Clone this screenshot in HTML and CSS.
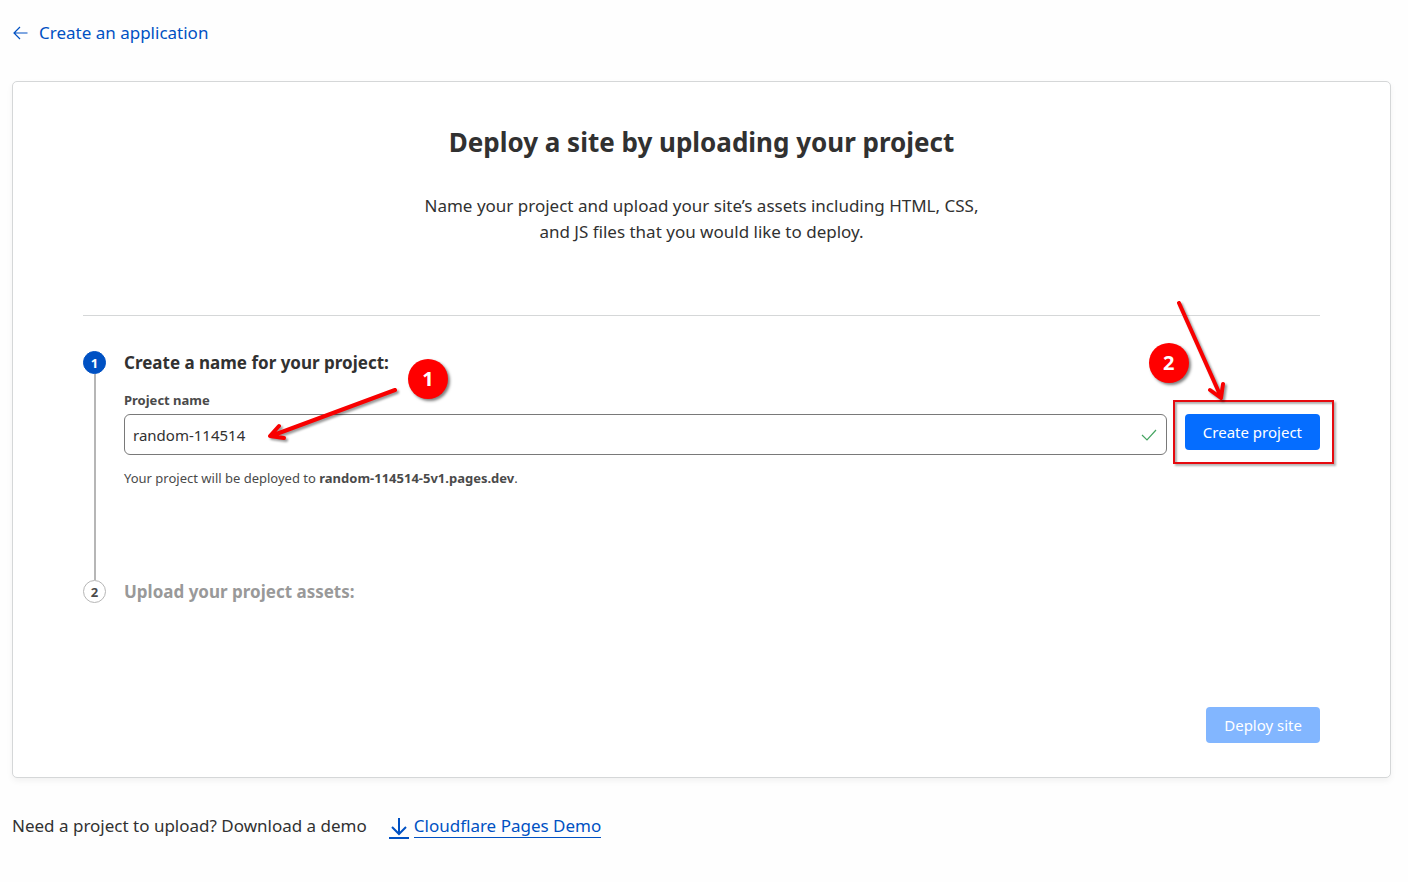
FILE: index.html
```html
<!DOCTYPE html>
<html lang="en">
<head>
<meta charset="utf-8">
<meta name="viewport" content="width=device-width, initial-scale=1">
<title>Create an application</title>
<link rel="stylesheet" href="styles.css">
</head>
<body>
<main class="page">
  <nav class="back">
    <a class="back-link" href="#applications">
      <svg class="back-icon" viewBox="0 0 16 14" aria-hidden="true"><path d="M15.500 7H2M8 1L2 7l6 6"/></svg>
      <span>Create an application</span>
    </a>
  </nav>

  <section class="card">
    <header class="intro">
      <h1 class="title">Deploy a site by uploading your project</h1>
      <p class="lead">Name your project and upload your site’s assets including HTML, CSS, and JS files that you would like to deploy.</p>
    </header>

    <ol class="steps">
      <li class="step step-current">
        <div class="rail"><span class="number">1</span></div>
        <div class="step-body">
          <h2 class="step-title">Create a name for your project:</h2>
          <form class="form">
            <div class="field">
              <label class="label" for="project-name">Project name</label>
              <div class="control">
                <input class="input" id="project-name" type="text" value="random-114514">
                <svg class="check" viewBox="0 0 16 14" aria-hidden="true"><path d="M1 7l5 5L15 2"/></svg>
              </div>
              <p class="hint">Your project will be deployed to <strong>random-114514-5v1.pages.dev</strong>.</p>
              <svg class="arrow arrow-name" viewBox="0 0 140 60" aria-hidden="true"><path d="M133 7L9 53M17 43L8 53l14 2"/></svg>
              <span class="badge badge-name">1</span>
            </div>
            <div class="action">
              <button class="button" type="button">Create project</button>
              <span class="frame"></span>
              <svg class="arrow arrow-create" viewBox="0 0 60 110" aria-hidden="true"><path d="M7 7l42 94M38 94l11 8 2-14"/></svg>
              <span class="badge badge-create">2</span>
            </div>
          </form>
        </div>
      </li>
      <li class="step">
        <div class="rail"><span class="number">2</span></div>
        <div class="step-body">
          <h2 class="step-title">Upload your project assets:</h2>
        </div>
      </li>
    </ol>

    <footer class="card-footer">
      <button class="button" type="button" disabled>Deploy site</button>
    </footer>
  </section>

  <p class="demo">
    <span>Need a project to upload? Download a demo</span>
    <a class="demo-link" href="#demo">
      <svg class="download" viewBox="0 0 20 22" aria-hidden="true"><path d="M10 1v16M3 10l7 7 7-7M0 21h20"/></svg>
      <span class="demo-text">Cloudflare Pages Demo</span>
    </a>
  </p>
</main>
</body>
</html>
```
FILE: styles.css
```css
*,
*::before,
*::after {
  box-sizing: border-box;
}

body {
  margin: 0;
  background: #fefefe;
  color: #313131;
  font-family: "Noto Sans", "Open Sans", sans-serif;
  font-size: 17px;
  line-height: 26px;
}

h1,
h2,
p,
ol {
  margin: 0;
  padding: 0;
}

svg {
  fill: none;
  stroke: currentColor;
}

.page {
  padding: 20px 17px 40px 12px;
}

.back {
  display: flex;
  margin-bottom: 35px;
}

.back-link {
  display: flex;
  align-items: center;
  gap: 11px;
  color: #0051c3;
  text-decoration: none;
}

.back-icon {
  width: 16px;
  height: 14px;
  stroke-width: 1.2;
}

.card {
  padding: 40px 70px 34px;
  border: 1px solid #d5d7d8;
  border-radius: 5px;
  background: #fff;
  box-shadow: 0 3px 6px rgba(0, 0, 0, 0.05);
}

.intro {
  padding-bottom: 70px;
  border-bottom: 1px solid #d5d7d8;
  text-align: center;
}

.title {
  margin-bottom: 31px;
  font-size: 26px;
  line-height: 40px;
}

.lead {
  max-width: 580px;
  margin: 0 auto;
}

.steps {
  padding-top: 35px;
  list-style: none;
}

.step {
  display: flex;
  gap: 18px;
}

.step-current {
  min-height: 229px;
}

.rail {
  display: flex;
  flex: none;
  flex-direction: column;
  align-items: center;
  width: 23px;
}

.step-current .rail::after {
  flex: 1;
  width: 2px;
  background: #b6b6b6;
  content: "";
}

.number {
  width: 23px;
  height: 23px;
  border: 1px solid #b6b6b6;
  border-radius: 50%;
  color: #4a4a4a;
  font-size: 13px;
  font-weight: 700;
  line-height: 22px;
  text-align: center;
}

.step-current .number {
  border-color: #0051c3;
  background: #0051c3;
  color: #fff;
}

.step-body {
  flex: 1;
  min-width: 0;
}

.step-title {
  color: #999;
  font-size: 17px;
  line-height: 24px;
}

.step-current .step-title {
  color: #313131;
}

.form {
  display: flex;
  gap: 18px;
  margin-top: 15px;
}

.field {
  position: relative;
  flex: 1;
  min-width: 0;
}

.label {
  display: block;
  margin-bottom: 4px;
  color: #4a4a4a;
  font-size: 13px;
  font-weight: 700;
  line-height: 20px;
}

.control {
  position: relative;
}

.input {
  display: block;
  width: 100%;
  height: 41px;
  padding: 0 40px 0 8px;
  border: 1px solid #797979;
  border-radius: 6px;
  background: #fff;
  color: #313131;
  font: inherit;
  font-size: 15px;
}

.check {
  position: absolute;
  top: 14px;
  right: 10px;
  width: 16px;
  height: 14px;
  color: #46a562;
  stroke-width: 1.2;
}

.hint {
  margin-top: 13px;
  color: #4a4a4a;
  font-size: 13px;
  line-height: 20px;
}

.action {
  position: relative;
  align-self: flex-start;
  margin-top: 24px;
}

.button {
  display: block;
  height: 36px;
  padding: 0 18px;
  border: 0;
  border-radius: 4px;
  background: #056dff;
  color: #fff;
  font: inherit;
  font-size: 15px;
}

.button:disabled {
  background: #82b6ff;
}

.card-footer {
  display: flex;
  justify-content: flex-end;
  margin-top: 103px;
}

.badge {
  position: absolute;
  width: 40px;
  height: 40px;
  border-radius: 50%;
  background: #f00;
  box-shadow: 2px 2px 3px rgba(0, 0, 0, 0.5);
  color: #fff;
  font-size: 20px;
  font-weight: 700;
  line-height: 40px;
  text-align: center;
}

.badge-name {
  top: -31px;
  left: 284px;
}

.badge-create {
  top: -71px;
  left: -36px;
}

.arrow {
  position: absolute;
  overflow: visible;
  color: #f80000;
  stroke-width: 4;
  stroke-linecap: round;
  stroke-linejoin: round;
  filter: drop-shadow(2px 2px 1px rgba(0, 0, 0, 0.4));
  pointer-events: none;
}

.arrow-name {
  top: -7px;
  left: 138px;
  width: 140px;
  height: 60px;
}

.arrow-create {
  top: -118px;
  left: -13px;
  width: 60px;
  height: 110px;
}

.frame {
  position: absolute;
  inset: -14px;
  left: -12px;
  border: 2px solid #e60a0f;
  box-shadow: 2px 2px 2px rgba(0, 0, 0, 0.3), inset 2px 2px 2px rgba(0, 0, 0, 0.3);
  pointer-events: none;
}

.demo {
  display: flex;
  flex-wrap: wrap;
  align-items: center;
  gap: 22px;
  margin-top: 35px;
}

.demo-link {
  display: flex;
  align-items: center;
  gap: 5px;
  color: #0051c3;
  text-decoration: none;
}

.download {
  width: 20px;
  height: 22px;
  margin-top: 4px;
  stroke-width: 2;
}

.demo-text {
  border-bottom: 1px solid currentColor;
  line-height: 22px;
}
```
